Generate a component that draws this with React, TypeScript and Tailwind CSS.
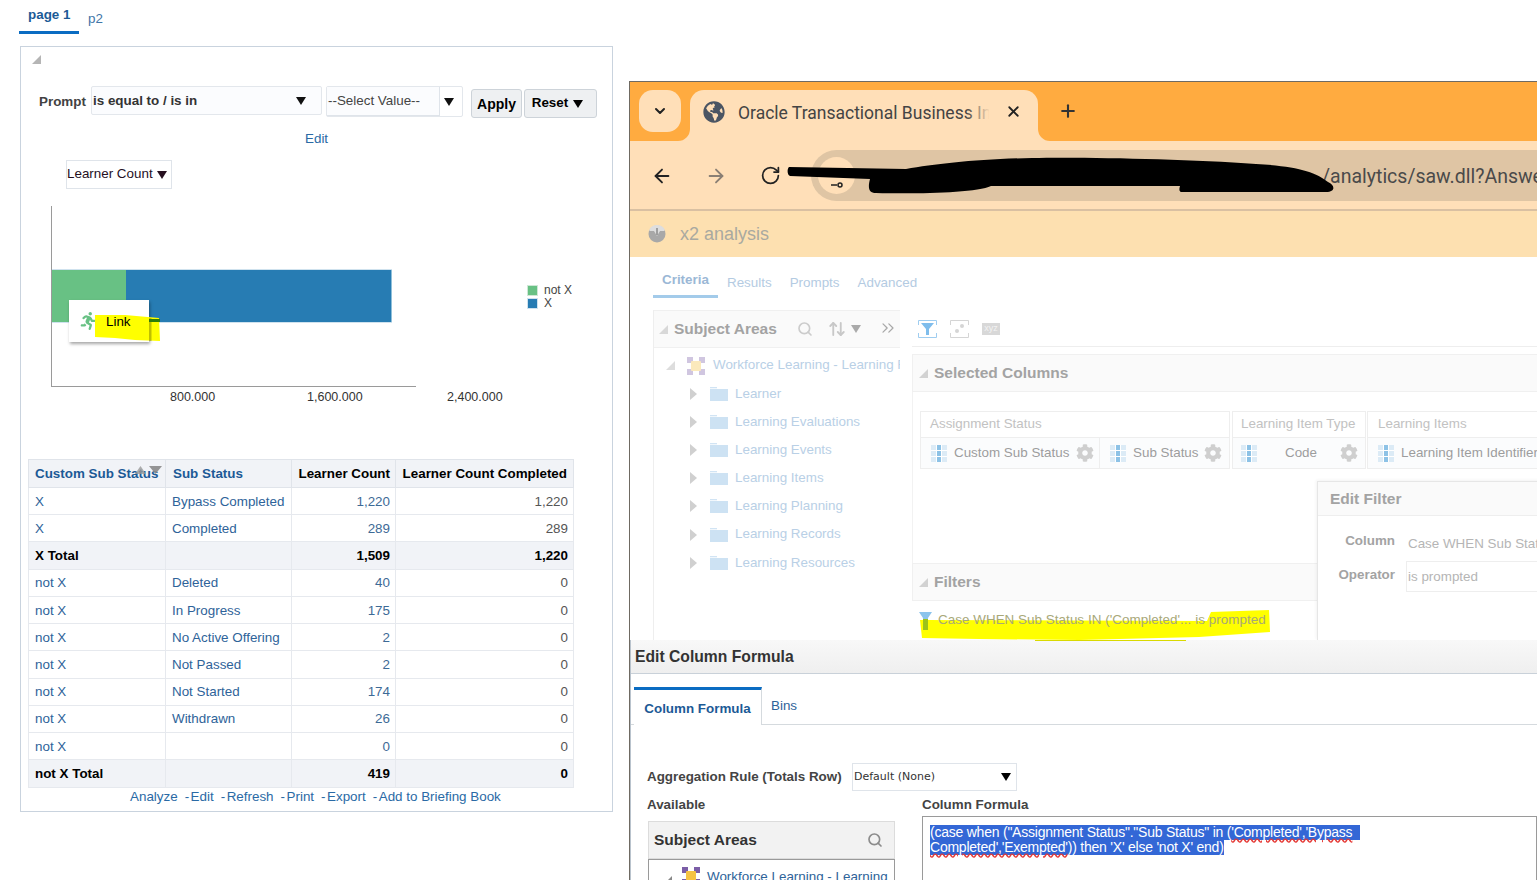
import { ArrowLeft, ArrowRight, ArrowUpDown, ChevronDown, ChevronsRight, Plus, RotateCw, Search, X } from 'lucide-react'
import { FaCog, FaGlobeAmericas, FaRunning } from 'react-icons/fa'

const ROWS = [
  { a: 'X', b: 'Bypass Completed', c: '1,220', d: '1,220' },
  { a: 'X', b: 'Completed', c: '289', d: '289' },
  { a: 'X Total', b: '', c: '1,509', d: '1,220', total: true },
  { a: 'not X', b: 'Deleted', c: '40', d: '0' },
  { a: 'not X', b: 'In Progress', c: '175', d: '0' },
  { a: 'not X', b: 'No Active Offering', c: '2', d: '0' },
  { a: 'not X', b: 'Not Passed', c: '2', d: '0' },
  { a: 'not X', b: 'Not Started', c: '174', d: '0' },
  { a: 'not X', b: 'Withdrawn', c: '26', d: '0' },
  { a: 'not X', b: '', c: '0', d: '0' },
  { a: 'not X Total', b: '', c: '419', d: '0', total: true },
]

const TREE = [
  'Learner',
  'Learning Evaluations',
  'Learning Events',
  'Learning Items',
  'Learning Planning',
  'Learning Records',
  'Learning Resources',
]

const FOOTER_LINKS = ['Edit', 'Refresh', 'Print', 'Export', 'Add to Briefing Book']

function Caret({ className = '' }: { className?: string }) {
  return (
    <svg width="10" height="8" viewBox="0 0 10 8" className={`shrink-0 ${className}`}>
      <polygon points="0,0 10,0 5,8" fill="currentColor" />
    </svg>
  )
}

function Corner({ color = '#b5b5b5' }: { color?: string }) {
  return (
    <svg width="9" height="9" viewBox="0 0 9 9" className="shrink-0">
      <polygon points="9,0 9,9 0,9" fill={color} />
    </svg>
  )
}

function Folder() {
  return (
    <svg width="18" height="14" viewBox="0 0 18 14" className="shrink-0">
      <path d="M0 0h7v2h11v12H0z" fill="#cde2f3" />
      <path d="M0 1.4h8" stroke="#fff" strokeWidth="0.8" />
    </svg>
  )
}

function AreaIcon({ faded }: { faded?: boolean }) {
  return (
    <svg width="18" height="18" viewBox="0 0 18 18" className="shrink-0" opacity={faded ? 0.35 : 1}>
      <rect x="0" y="0" width="18" height="18" fill="#7b5ea7" />
      <rect x="6" y="0" width="6" height="18" fill="#fff" />
      <rect x="0" y="6" width="18" height="6" fill="#fff" />
      <rect x="4" y="4" width="10" height="10" rx="1" fill="#f6c343" />
    </svg>
  )
}

function ColumnIcon() {
  return (
    <svg width="16" height="17" viewBox="0 0 16 17" className="shrink-0">
      <rect width="16" height="17" fill="#dcebf6" />
      <rect x="6" width="4" height="17" fill="#8dc2e6" />
      <path d="M0 5.500h16M0 11.500h16" stroke="#fff" />
      <path d="M5.500 0v17M10.500 0v17" stroke="#fff" />
    </svg>
  )
}

function ColumnCell({ label, width, center }: { label: string; width: string; center?: boolean }) {
  return (
    <div className={`flex h-[30px] items-center pl-[10px] ${width}`}>
      <ColumnIcon />
      <span className={`ml-[7px] flex-1 truncate text-[13.4px] text-[#9d9d9d] ${center ? 'text-center' : ''}`}>
        {label}
      </span>
      <FaCog className="ml-[2px] shrink-0 text-[#cfcfcf]" size={18} />
    </div>
  )
}

function SectionHeader({ title }: { title: string }) {
  return (
    <div className="flex h-[38px] items-center gap-[6px] border border-[#f0f0f0] bg-[#fafafa] pl-[6px]">
      <Corner color="#d2d2d2" />
      <span className="pb-[1px] text-[15.500px] font-bold text-[#a3a3a3]">{title}</span>
    </div>
  )
}

function LeftPanel() {
  return (
    <div className="w-[629px] shrink-0 pl-[19px] font-['Liberation_Sans',sans-serif]">
      <div className="flex h-[34px] w-[200px]">
        <div className="h-[34px] w-[60px] border-b-[3px] border-[#0a6cc2] pl-[9px] pt-[6px] text-[13.4px] font-bold leading-[18px] text-[#1c5a96]">
          page 1
        </div>
        <div className="pl-[9px] pt-[10px] text-[13.4px] leading-[18px] text-[#3f76a8]">p2</div>
      </div>

      <div className="relative ml-px mt-[12px] h-[766px] w-[593px] border border-[#c9d3de] bg-white">
        <div className="pl-[11px] pt-[8px]">
          <Corner />
        </div>

        <div className="ml-[18px] mt-[22px] flex items-start">
          <span className="mt-[6px] w-[52px] text-[13.4px] font-bold text-[#424242]">Prompt</span>
          <div className="flex h-[29px] w-[231px] items-center rounded-[2px] border border-[#e3e7ec] bg-[#fbfcfe] pl-[1px] pr-[15px]">
            <span className="flex-1 pt-[1px] text-[13.4px] font-bold text-[#333]">is equal to / is in</span>
            <Caret className="text-[#111]" />
          </div>
          <div className="ml-[4px] flex h-[31px] w-[137px] items-center rounded-[2px] border border-[#e3e7ec]">
            <span className="flex h-[29px] w-[113px] items-center border-b border-r border-[#dfe4ea] bg-[#fbfcfe] pl-[1px] pt-[1px] text-[13.4px] text-[#444]">
              --Select Value--
            </span>
            <Caret className="ml-[4px] text-[#111]" />
          </div>
          <div className="ml-[8px] mt-[3px] flex h-[29px] w-[51px] items-center justify-center rounded-[3px] border border-[#cdd3d9] bg-[#eef0f2] pt-[1px] text-[14px] font-bold text-black">
            Apply
          </div>
          <div className="ml-[2px] mt-[3px] flex h-[29px] w-[73px] items-center justify-center gap-[5px] rounded-[3px] border border-[#cdd3d9] bg-[#eef0f2] pr-[6px] text-[13.4px] font-bold text-black">
            Reset
            <Caret />
          </div>
        </div>

        <div className="mt-[12px] pl-[284px] text-[13.4px] leading-[18px] text-[#2a6aa5]">Edit</div>

        <div className="ml-[45px] mt-[12px] flex h-[29px] w-[106px] items-center gap-[4px] whitespace-nowrap border border-[#dfe4ea] text-[13.4px] text-[#26101f]">
          Learner Count
          <Caret />
        </div>

        <div className="relative ml-[30px] mt-[17px] h-[181px] w-[365px] border-b border-l border-[#9a9a9a] pt-[63px]">
          <div className="flex h-[54px] w-[340px] border-y border-[#cfe2ee]">
            <div className="w-[74px] bg-[#68c184]" />
            <div className="w-[266px] border-r border-[#8fc0da] bg-[#277cb3]" />
          </div>
          <div className="absolute left-[17px] top-[94px] flex h-[42px] w-[80px] items-center bg-white pb-[1px] pl-[10px] shadow-[1px_2px_3px_rgba(0,0,0,0.35)]">
            <FaRunning className="text-[#68c184]" size={18} />
          </div>
          <svg width="66" height="27" viewBox="0 0 66 27" className="absolute left-[43px] top-[108px]">
            <path d="M0 1 L30 1 L64 4 L65 27 L40 26 L20 24 L0 23 Z" fill="#ffff00" />
            <rect x="54" y="4" width="2.500" height="23" fill="#000" opacity="0.25" />
            <rect x="54" y="5" width="11" height="3" fill="#2d7d0a" />
          </svg>
          <span className="absolute left-[54px] top-[107px] text-[13.4px] leading-[18px] text-black">Link</span>
        </div>

        <div className="relative ml-[30px] mt-[2px] h-[18px] w-[460px] text-[12.500px] leading-[16px] text-[#333]">
          <span className="absolute left-[119px]">800.000</span>
          <span className="absolute left-[256px]">1,600.000</span>
          <span className="absolute left-[396px]">2,400.000</span>
        </div>

        <div className="absolute left-[506px] top-[237px] text-[12px] leading-[13px] text-[#444]">
          <div className="flex items-center gap-[6px]">
            <span className="h-[11px] w-[11px] border border-[#cfe7d6] bg-[#68c184]" />
            not X
          </div>
          <div className="flex items-center gap-[6px]">
            <span className="h-[11px] w-[11px] border border-[#cfe2ee] bg-[#277cb3]" />
            X
          </div>
        </div>

        <table className="ml-[7px] mt-[52px] w-[545px] table-fixed border-collapse text-[13.4px]">
          <colgroup>
            <col className="w-[137px]" />
            <col className="w-[126px]" />
            <col className="w-[104px]" />
            <col className="w-[178px]" />
          </colgroup>
          <thead>
            <tr className="h-[28px] bg-[#f1f3f7] font-bold">
              <th className="relative border border-[#e0e4ea] pl-[6px] pt-px text-left font-bold text-[#1c5a96]">
                <span className="whitespace-nowrap">Custom Sub Status</span>
                <svg width="27" height="9" viewBox="0 0 27 9" className="absolute right-[3px] top-[6px]">
                  <polygon points="0,8 5.500,0 11,8" fill="#9a9a9a" opacity="0.8" />
                  <polygon points="14,0 27,0 20.500,8" fill="#8a8a8a" opacity="0.9" />
                </svg>
              </th>
              <th className="border border-[#e0e4ea] pl-[7px] pt-px text-left font-bold text-[#1c5a96]">Sub Status</th>
              <th className="whitespace-nowrap border border-[#e0e4ea] pr-[5px] pt-px text-right font-bold text-black">Learner Count</th>
              <th className="whitespace-nowrap border border-[#e0e4ea] pr-[6px] pt-px text-right font-bold text-black">Learner Count Completed</th>
            </tr>
          </thead>
          <tbody>
            {ROWS.map((r, i) => (
              <tr key={i} className={r.total ? 'h-[27.500px] bg-[#f1f3f7] font-bold text-black' : 'h-[27.200px]'}>
                <td className={`border border-[#e6e9ee] pl-[6px] pt-px ${r.total ? '' : 'text-[#2e6399]'}`}>{r.a}</td>
                <td className={`whitespace-nowrap border border-[#e6e9ee] pl-[6px] pt-px ${r.total ? '' : 'text-[#2e6399]'}`}>{r.b}</td>
                <td className={`border border-[#e6e9ee] pr-[5px] pt-px text-right ${r.total ? '' : 'text-[#3d6a96]'}`}>{r.c}</td>
                <td className={`border border-[#e6e9ee] pr-[5px] pt-px text-right ${r.total ? '' : 'text-[#555]'}`}>{r.d}</td>
              </tr>
            ))}
          </tbody>
        </table>

        <div className="mt-[1px] whitespace-nowrap pl-[109px] text-[13.4px] leading-[16px] text-[#2a6aa5]">
          <span>Analyze</span>
          {FOOTER_LINKS.map((l) => (
            <span key={l}>
              <span className="ml-[7px] mr-[1.5px]">-</span>
              {l}
            </span>
          ))}
        </div>
      </div>
    </div>
  )
}

function BrowserChrome() {
  return (
    <>
      <div className="flex h-[59px] bg-[#ffab40] pl-[9px] pt-[8px]">
        <div className="flex h-[42px] w-[42px] shrink-0 items-center justify-center rounded-[14px] bg-[#ffdfb8]">
          <ChevronDown size={16} strokeWidth={3} className="text-[#222]" />
        </div>
        <div className="relative ml-[9px] flex h-[51px] w-[348px] shrink-0 items-center rounded-t-[14px] bg-[#ffdfb8] pb-[8px] pl-[13px]">
          <svg width="12" height="12" viewBox="0 0 12 12" className="absolute bottom-0 left-[-12px]">
            <path d="M12 0 A12 12 0 0 1 0 12 H12 Z" fill="#ffdfb8" />
          </svg>
          <svg width="12" height="12" viewBox="0 0 12 12" className="absolute bottom-0 left-[348px]">
            <path d="M0 0 A12 12 0 0 0 12 12 H0 Z" fill="#ffdfb8" />
          </svg>
          <FaGlobeAmericas size={22} className="shrink-0 text-[#4b5563]" />
          <span className="ml-[13px] mt-[3px] w-[251px] shrink-0 overflow-hidden whitespace-nowrap font-['Roboto',sans-serif] text-[17.500px] text-[#444444]">
            Oracle Transactional Business Intelligence
          </span>
          <span className="absolute left-[276px] top-[10px] h-[26px] w-[24px] bg-gradient-to-r from-[#ffdfb800] to-[#ffdfb8]" />
          <X size={17} strokeWidth={2.5} className="ml-[16px] shrink-0 text-[#222]" />
        </div>
        <Plus size={20} strokeWidth={2.5} className="ml-[20px] mt-[11px] shrink-0 text-[#333]" />
      </div>

      <div className="relative flex h-[70px] items-center border-b-[2px] border-[#d9c0a2] bg-[#ffdfb8] pl-[21px] pt-[1px] font-['Roboto',sans-serif]">
        <ArrowLeft size={22} strokeWidth={2} className="shrink-0 text-[#222]" />
        <ArrowRight size={22} strokeWidth={2} className="ml-[32px] shrink-0 text-[#8a7f74]" />
        <RotateCw size={21} strokeWidth={2} className="ml-[33px] shrink-0 text-[#222]" />
        <div className="ml-[30px] flex h-[51px] flex-1 items-center overflow-hidden rounded-l-[26px] bg-[#dfc5a4] pl-[7px]">
          <div className="flex h-[37px] w-[37px] shrink-0 items-end justify-center rounded-full bg-[#ffdfb8] pb-[6px]">
            <svg width="12" height="6" viewBox="0 0 12 6">
              <path d="M0 3h6" stroke="#222" strokeWidth="1.600" />
              <circle cx="9" cy="3" r="2" fill="none" stroke="#222" strokeWidth="1.500" />
            </svg>
          </div>
          <span className="ml-[467px] mt-[2px] whitespace-nowrap text-[19.500px] text-[#4a4a4a]">/analytics/saw.dll?Answers</span>
        </div>
        <svg width="560" height="44" viewBox="0 0 560 44" className="absolute left-[156px] top-[14px]">
          <path
            d="M3 12 C1 14 1 20 4 21 L84 24 C82 32 82 38 90 38 C130 39 190 38 205 31 L394 31 C393 34 393 37 396 37 L540 37 C550 37 549 30 542 27 C530 17 510 11 470 9 C400 4 300 2 246 3 C190 4 150 9 120 14 L3 12 Z"
            fill="#000"
          />
        </svg>
      </div>

      <div className="flex h-[46px] items-center bg-[#fde0b0] pl-[18px]">
        <svg width="18" height="18" viewBox="0 0 18 18">
          <circle cx="9" cy="9" r="8.500" fill="#a8a8a8" />
          <path d="M1.500 6 H6 L9 11 L12 6 H16.500 V4 A9 9 0 0 0 1.500 4 Z" fill="#dedede" />
          <path d="M9 3 V10" stroke="#8a8a8a" strokeWidth="1.500" />
        </svg>
        <span className="ml-[14px] font-['Liberation_Sans',sans-serif] text-[18px] text-[#a9a9a0]">x2 analysis</span>
      </div>
    </>
  )
}

function SubjectPanel() {
  return (
    <div className="h-[330px] w-[247px] shrink-0 border-l border-[#eeeeee]">
      <div className="flex h-[38px] items-center border-b border-t border-[#f0f0f0] bg-[#fafafa] pl-[5px]">
        <Corner color="#d8d8d8" />
        <span className="ml-[6px] text-[15.500px] font-bold text-[#a3a3a3]">Subject Areas</span>
        <Search size={16} strokeWidth={2.5} className="ml-[20px] shrink-0 text-[#cccccc]" />
        <ArrowUpDown size={18} strokeWidth={2.5} className="ml-[15px] shrink-0 text-[#c8c8c8]" />
        <Caret className="ml-[5px] text-[#aaaaaa]" />
        <ChevronsRight size={20} strokeWidth={1.5} className="mb-[3px] ml-[17px] shrink-0 text-[#a8a8a8]" />
      </div>
      <div className="flex h-[32px] items-center overflow-hidden whitespace-nowrap pl-[12px] pt-[3px]">
        <Corner color="#dddddd" />
        <span className="ml-[12px]">
          <AreaIcon faded />
        </span>
        <span className="ml-[8px] text-[13.4px] text-[#b9d0e6]">Workforce Learning - Learning Real Time</span>
      </div>
      {TREE.map((t) => (
        <div key={t} className="flex h-[28.100px] items-center pl-[36px]">
          <svg width="7" height="12" viewBox="0 0 7 12" className="shrink-0">
            <polygon points="0,0 7,6 0,12" fill="#d0d0d0" />
          </svg>
          <span className="ml-[13px]">
            <Folder />
          </span>
          <span className="ml-[7px] text-[13.4px] text-[#b9d0e6]">{t}</span>
        </div>
      ))}
    </div>
  )
}

function CriteriaPanel() {
  return (
    <div className="ml-[12px] flex-1">
      <div className="flex h-[37px] items-center gap-[13px] border-b border-[#eeeeee] pl-[6px] pt-[2px]">
        <svg width="19" height="18" viewBox="0 0 19 18">
          <path d="M0.500 5V0.500H18.500V5M0.500 13V17.500H18.500V13" fill="none" stroke="#9fcdf0" />
          <polygon points="3,3 16,3 11,9 11,15 8,15 8,9" fill="#7fbdec" />
        </svg>
        <svg width="19" height="18" viewBox="0 0 19 18">
          <path d="M0.500 5V0.500H18.500V5M0.500 13V17.500H18.500V13" fill="none" stroke="#d5d5d5" />
          <circle cx="7" cy="11" r="2" fill="#d5d5d5" />
          <circle cx="12" cy="6" r="2" fill="#d5d5d5" />
        </svg>
        <span className="flex h-[12px] w-[18px] items-center justify-center bg-[#d8d8d8] text-[9px] text-[#f3f3f3]">xyz</span>
      </div>

      <div className="mt-[7px]">
        <SectionHeader title="Selected Columns" />
      </div>
      <div className="h-[171px] border-l border-[#f2f2f2] pl-[7px] pt-[19px]">
        <div className="flex whitespace-nowrap">
          <div className="w-[310px] shrink-0 border border-[#eeeeee]">
            <div className="flex h-[26px] items-center border-b border-[#eeeeee] pl-[9px] text-[13.4px] text-[#c2c2c2]">Assignment Status</div>
            <div className="flex bg-[#fbfcfd]">
              <ColumnCell label="Custom Sub Status" width="w-[179px] border-r border-[#eeeeee] pr-[5px]" />
              <ColumnCell label="Sub Status" width="w-[129px] pr-[7px]" />
            </div>
          </div>
          <div className="ml-[2px] w-[134px] shrink-0 border border-[#eeeeee]">
            <div className="flex h-[26px] items-center border-b border-[#eeeeee] pl-[8px] text-[13.4px] text-[#c2c2c2]">Learning Item Type</div>
            <div className="bg-[#fbfcfd]">
              <ColumnCell label="Code" width="w-[132px] !pl-[8px] pr-[7px]" center />
            </div>
          </div>
          <div className="ml-px w-[300px] shrink-0 border border-[#eeeeee]">
            <div className="flex h-[26px] items-center border-b border-[#eeeeee] pl-[10px] text-[13.4px] text-[#c2c2c2]">Learning Items</div>
            <div className="bg-[#fbfcfd]">
              <ColumnCell label="Learning Item Identifier" width="w-[298px] pr-[5px]" />
            </div>
          </div>
        </div>
      </div>
      <SectionHeader title="Filters" />
      <div className="relative h-[39px]">
        <svg width="352" height="32" viewBox="0 0 352 32" className="absolute left-[7px] top-[8px]">
          <path d="M1 11 L288 12 L292 3 L350 1 L351 23 L280 28 L160 31 L60 30 L3 29 Z" fill="#ffff00" />
        </svg>
        <svg width="13" height="18" viewBox="0 0 13 18" className="absolute left-[7px] top-[11px]">
          <polygon points="0,0 13,0 9,6 9,18 4,18 4,6" fill="#8cc4ec" />
          <rect x="4" y="7" width="5" height="11" fill="#9cc31a" />
        </svg>
        <span className="absolute left-[26px] top-[9px] whitespace-nowrap text-[13.4px] tracking-[0.05px] text-[#a8a878]">
          Case WHEN Sub Status IN ('Completed'... is prompted
        </span>
      </div>
    </div>
  )
}

function EditFilterDialog() {
  return (
    <div className="absolute left-[687px] top-[399px] h-[159px] w-[300px] border-l border-t border-[#e6e6e6] bg-white shadow-[-1px_-1px_3px_rgba(0,0,0,0.05)]">
      <div className="flex h-[34px] items-center border-b border-[#eeeeee] bg-[#fafafa] pl-[12px] text-[15.500px] font-bold text-[#a3a3a3]">
        Edit Filter
      </div>
      <div className="mt-[12px] flex items-center">
        <span className="w-[77px] text-right text-[13.4px] font-bold text-[#a3a3a3]">Column</span>
        <span className="ml-[13px] mt-[6px] whitespace-nowrap text-[13.4px] text-[#b5b5b5]">Case WHEN Sub Status</span>
      </div>
      <div className="mt-[7px] flex items-center">
        <span className="mb-[4px] w-[77px] text-right text-[13.4px] font-bold text-[#a3a3a3]">Operator</span>
        <span className="ml-[11px] flex h-[31px] flex-1 items-center border border-[#eeeeee] pl-[1px] text-[13.4px] text-[#b5b5b5]">
          is prompted
        </span>
      </div>
    </div>
  )
}

function FormulaDialog() {
  return (
    <div className="absolute bottom-0 left-0 right-0 top-[558px] overflow-hidden border-l border-[#b9c3cd] bg-white">
      <div className="absolute left-[404px] top-0 h-px w-[151px] bg-[#d9d900]" />
      <div className="flex h-[34px] items-center border-b border-[#c9d1d9] bg-gradient-to-b from-[#f8f8f8] to-[#efefef] pl-[4px] text-[15.700px] font-bold text-[#333]">
        Edit Column Formula
      </div>
      <div className="flex h-[51px] items-end border-b border-[#d5dade] pl-[3px] pt-[13px]">
        <div className="-mb-px flex h-[38px] w-[128px] items-center justify-center border-r border-t-[3px] border-[#d5dade] border-t-[#0a6cc2] bg-white pt-[3px] text-[13.4px] font-bold text-[#1c5a96]">
          Column Formula
        </div>
        <div className="flex h-[38px] items-center pl-[9px] pt-[3px] text-[13.4px] text-[#2e6399]">Bins</div>
      </div>

      <div className="ml-[16px] mt-[38px] flex items-center">
        <span className="w-[205px] text-[13.4px] font-bold text-[#444]">Aggregation Rule (Totals Row)</span>
        <div className="flex h-[28px] w-[165px] items-center border border-[#dfe4ea] pl-[1px] pr-[5px] font-['DejaVu_Sans',sans-serif] text-[11px] text-[#333]">
          <span className="flex-1">Default (None)</span>
          <Caret className="text-black" />
        </div>
      </div>

      <div className="ml-[16px] mt-[6px] flex">
        <div className="w-[247px]">
          <div className="text-[13.4px] font-bold leading-[16px] text-[#444]">Available</div>
          <div className="ml-px mt-[8px] flex h-[38px] w-[247px] items-center justify-between border border-[#dcdcdc] bg-[#f2f2f2] pl-[5px] pr-[11px] text-[15.500px] font-bold text-[#333]">
            Subject Areas
            <Search size={16} strokeWidth={2.5} className="text-[#8c8c8c]" />
          </div>
          <div className="ml-px flex h-[40px] w-[247px] items-start gap-[10px] overflow-hidden whitespace-nowrap border-x border-t border-[#9a9a9a] pl-[14px] pt-[7px] text-[13.4px] text-[#2e6399]">
            <span className="mt-[9px]">
              <Corner color="#888" />
            </span>
            <AreaIcon />
            <span className="-ml-[3px]">Workforce Learning - Learning</span>
          </div>
        </div>
        <div className="ml-[28px] flex-1">
          <div className="text-[13.4px] font-bold leading-[16px] text-[#444]">Column Formula</div>
          <div className="mt-[3px] h-[80px] border border-[#9a9a9a] pl-[7px] pt-[8px] text-[14px] leading-[15px] tracking-[-0.23px] text-white">
            <span className="block w-[430px] whitespace-nowrap bg-[#3367d6]">
              (case when ("Assignment Status"."Sub Status" in (<span className="underline decoration-[#e53935] decoration-wavy">'Completed','Bypass</span>
            </span>
            <span className="block w-[294px] whitespace-nowrap bg-[#3367d6]">
              <span className="underline decoration-[#e53935] decoration-wavy">Completed','Exempted'</span>)) then 'X' else 'not X' end)
            </span>
          </div>
        </div>
      </div>
    </div>
  )
}

function BrowserWindow() {
  return (
    <div className="relative mt-[81px] h-[799px] min-w-0 flex-1 overflow-hidden border-l border-t border-[#6f6a62] bg-white font-['Liberation_Sans',sans-serif]">
      <BrowserChrome />
      <div className="flex h-[41px] items-end pl-[23px]">
        <div className="h-[26px] w-[65px] border-b-[3px] border-[#a3cbea] pl-[9px] text-[13.4px] font-bold leading-[16px] text-[#9bb8d6]">
          Criteria
        </div>
        <div className="flex h-[26px] gap-[18px] pl-[9px] pt-[3px] text-[13.4px] leading-[16px] text-[#b4cbe2]">
          <span>Results</span>
          <span>Prompts</span>
          <span>Advanced</span>
        </div>
      </div>
      <div className="ml-[23px] mt-[12px] flex w-[1000px]">
        <SubjectPanel />
        <CriteriaPanel />
      </div>
      <EditFilterDialog />
      <FormulaDialog />
    </div>
  )
}

export default function App() {
  return (
    <div className="flex h-[880px] w-[1537px] overflow-hidden bg-white">
      <LeftPanel />
      <BrowserWindow />
    </div>
  )
}
